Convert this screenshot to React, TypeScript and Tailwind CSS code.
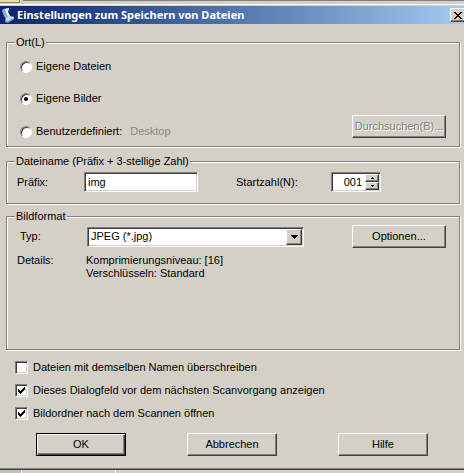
import { useState } from "react";
import type { ButtonHTMLAttributes, InputHTMLAttributes, ReactNode } from "react";

type Location = "documents" | "pictures" | "custom";

const RAISED =
  "border border-t-white border-l-white border-r-[#404040] border-b-[#404040] shadow-[inset_-1px_-1px_0_#808080]";
const DEFAULT_RAISED =
  "border border-black shadow-[inset_1px_1px_0_#fff,inset_-1px_-1px_0_#404040,inset_-2px_-2px_0_#808080]";
const SUNKEN =
  "border border-t-[#808080] border-l-[#808080] border-r-white border-b-white shadow-[inset_1px_1px_0_#404040,inset_-1px_-1px_0_#d4d0c8]";

const Button = ({
  className = "",
  isDefault = false,
  ...props
}: ButtonHTMLAttributes<HTMLButtonElement> & { isDefault?: boolean }) => (
  <button
    type="button"
    className={`h-[23px] shrink-0 bg-[#d4d0c8] text-center ${
      isDefault ? DEFAULT_RAISED : RAISED
    } ${className}`}
    {...props}
  />
);

const Group = ({
  title,
  className = "",
  children,
}: {
  title: string;
  className?: string;
  children: ReactNode;
}) => (
  <fieldset
    className={`min-w-0 border border-[#808080] shadow-[1px_1px_0_#fff,inset_1px_1px_0_#fff] ${className}`}
  >
    <legend className="ml-2 bg-[#d4d0c8] px-px">{title}</legend>
    {children}
  </fieldset>
);

const Radio = ({
  label,
  ...props
}: InputHTMLAttributes<HTMLInputElement> & { label: string }) => (
  <label className="flex items-center gap-1">
    <span className="relative size-3 shrink-0">
      <input
        type="radio"
        name="location"
        className="peer block size-3 appearance-none rounded-full border border-t-[#808080] border-l-[#808080] border-r-white border-b-white bg-white shadow-[inset_1px_1px_0_#404040]"
        {...props}
      />
      <span className="pointer-events-none absolute top-1 left-1 hidden size-1 rounded-full bg-black peer-checked:block" />
    </span>
    {label}
  </label>
);

const Checkbox = ({
  label,
  defaultChecked,
}: {
  label: string;
  defaultChecked?: boolean;
}) => (
  <label className="flex items-center gap-[5px]">
    <span className="relative size-[13px] shrink-0">
      <input
        type="checkbox"
        defaultChecked={defaultChecked}
        className={`peer block size-[13px] appearance-none bg-white ${SUNKEN}`}
      />
      <svg
        viewBox="0 0 7 7"
        shapeRendering="crispEdges"
        className="pointer-events-none absolute top-[3px] left-[3px] hidden size-[7px] peer-checked:block"
      >
        <path d="M0 2h1v1h1v1h1v-1h1v-1h1v-1h1v-1h1v3h-1v1h-1v1h-1v1h-1v1h-1v-1h-1v-1h-1z" />
      </svg>
    </span>
    {label}
  </label>
);

const App = () => {
  const [location, setLocation] = useState<Location>("pictures");
  const [start, setStart] = useState(1);

  return (
    <div className="overflow-hidden bg-[#d4d0c8] font-['Liberation_Sans',Arial,sans-serif] text-[11px] leading-[13px] text-black">
      {/* Edge of the window behind */}
      <div className="flex h-1 items-start">
        <div className="h-[3px] w-5 border-r border-b border-[#8c8468] bg-[#e6dcb4]" />
        <div className="ml-[3px] h-px flex-1 bg-[#808080]" />
      </div>

      <div className="border-t border-white pt-px">
        {/* Title bar */}
        <header className="flex h-[18px] items-center bg-linear-to-r from-[#0a246a] to-[#a6caf0] pl-px">
          <svg viewBox="0 0 14 16" className="h-4 w-3.5 shrink-0">
            <path d="M1 4L2 2L8 1L7 5L9 9L5 12L3 9Z" fill="#8fa8dc" />
            <path d="M4 2L8 1L7 5L9 9L7 10L5 6Z" fill="#e6effc" />
            <path d="M5 11L9 9L13 10L13 12L7 15L4 14Z" fill="#c8d8f6" />
            <path d="M4 13L7 14L13 11L13 12L7 16L4 15Z" fill="#7b94d0" />
          </svg>
          <h1 className="ml-0.5 flex-1 truncate font-['Noto_Sans',Tahoma,sans-serif] text-[11px] leading-[18px] font-bold text-white">
            Einstellungen zum Speichern von Dateien
          </h1>
          <button
            type="button"
            aria-label="Schließen"
            className={`-mr-0.5 flex h-3.5 w-4 shrink-0 items-center justify-center bg-[#d4d0c8] ${RAISED}`}
          >
            <svg viewBox="0 0 8 7" shapeRendering="crispEdges" className="h-[7px] w-2">
              <path d="M0 0h2v1h1v1h2v-1h1v-1h2v1h-1v1h-1v1h-1v1h1v1h1v1h1v1h-2v-1h-1v-1h-2v1h-1v1h-2v-1h1v-1h1v-1h1v-1h-1v-1h-1v-1h-1z" />
            </svg>
          </button>
        </header>

        <form className="pt-3 pr-1 pl-1.5" onSubmit={(e) => e.preventDefault()}>
          <Group title="Ort(L)">
            <div className="px-[13px] pt-[11px] pb-2">
              <Radio
                label="Eigene Dateien"
                checked={location === "documents"}
                onChange={() => setLocation("documents")}
              />
              <div className="pt-[19px]">
                <Radio
                  label="Eigene Bilder"
                  checked={location === "pictures"}
                  onChange={() => setLocation("pictures")}
                />
              </div>
              <div className="flex items-end pt-2.5">
                <Radio
                  label="Benutzerdefiniert:"
                  checked={location === "custom"}
                  onChange={() => setLocation("custom")}
                />
                <span className="ml-2 flex-1 text-[#8c8984]">Desktop</span>
                <Button
                  disabled={location !== "custom"}
                  className="w-[94px] disabled:text-[#808080] disabled:text-shadow-[1px_1px_0_#fff]"
                >
                  Durchsuchen(B)...
                </Button>
              </div>
            </div>
          </Group>

          <Group title="Dateiname (Präfix + 3-stellige Zahl)" className="mt-2">
            <div className="flex items-center pt-1 pb-[11px] pl-2.5">
              <label htmlFor="prefix" className="w-[67px]">
                Präfix:
              </label>
              <input
                id="prefix"
                defaultValue="img"
                className={`h-5 w-[114px] bg-white px-[3px] ${SUNKEN}`}
              />
              <label htmlFor="start" className="ml-[38px] w-[95px]">
                Startzahl(N):
              </label>
              <div className={`flex h-5 w-[50px] bg-white p-px ${SUNKEN}`}>
                <input
                  id="start"
                  inputMode="numeric"
                  value={String(start).padStart(3, "0")}
                  onChange={(e) => setStart(Number(e.target.value) || 0)}
                  className="w-0 flex-1 pr-[3px] text-right"
                />
                <div className="flex w-3.5 flex-col">
                  <button
                    type="button"
                    aria-label="Erhöhen"
                    onClick={() => setStart(start + 1)}
                    className={`flex h-2 items-center justify-center bg-[#d4d0c8] ${RAISED}`}
                  >
                    <svg viewBox="0 0 3 2" shapeRendering="crispEdges" className="h-0.5 w-[3px]">
                      <path d="M1 0h1v1h1v1h-3v-1h1z" />
                    </svg>
                  </button>
                  <button
                    type="button"
                    aria-label="Verringern"
                    onClick={() => setStart(Math.max(0, start - 1))}
                    className={`flex h-2 items-center justify-center bg-[#d4d0c8] ${RAISED}`}
                  >
                    <svg viewBox="0 0 3 2" shapeRendering="crispEdges" className="h-0.5 w-[3px]">
                      <path d="M0 0h3v1h-1v1h-1v-1h-1z" />
                    </svg>
                  </button>
                </div>
              </div>
            </div>
          </Group>

          <Group title="Bildformat" className="mt-1.5">
            <div className="pt-0.5 pr-[13px] pb-[69px] pl-2.5">
              <div className="flex items-center">
                <label htmlFor="type" className="w-[70px] pl-[3px]">
                  Typ:
                </label>
                <div className="relative">
                  <select
                    id="type"
                    className={`block h-5 w-[217px] appearance-none bg-white pl-[3px] ${SUNKEN}`}
                  >
                    <option>JPEG (*.jpg)</option>
                  </select>
                  <span
                    className={`pointer-events-none absolute top-0.5 right-0.5 flex h-4 w-4 items-center justify-center bg-[#d4d0c8] ${RAISED}`}
                  >
                    <svg viewBox="0 0 7 4" shapeRendering="crispEdges" className="h-1 w-[7px]">
                      <path d="M0 0h7v1h-1v1h-1v1h-1v1h-1v-1h-1v-1h-1v-1h-1z" />
                    </svg>
                  </span>
                </div>
                <Button className="ml-auto w-[94px]">Optionen...</Button>
              </div>
              <div className="flex pt-1.5">
                <span className="w-[69px]">Details:</span>
                <p>
                  Komprimierungsniveau: [16]
                  <br />
                  Verschlüsseln: Standard
                </p>
              </div>
            </div>
          </Group>

          <div className="flex flex-col gap-2.5 pt-[11px] pl-[9px]">
            <Checkbox label="Dateien mit demselben Namen überschreiben" />
            <Checkbox
              label="Dieses Dialogfeld vor dem nächsten Scanvorgang anzeigen"
              defaultChecked
            />
            <Checkbox label="Bildordner nach dem Scannen öffnen" defaultChecked />
          </div>

          <div className="flex justify-between pt-[13px] pr-8 pb-3 pl-[30px]">
            <Button isDefault className="w-[90px]">
              OK
            </Button>
            <Button className="w-[90px]">Abbrechen</Button>
            <Button className="w-[90px]">Hilfe</Button>
          </div>
        </form>
      </div>

      {/* Lower frame of the dialog and the window behind */}
      <div className="border-t border-b border-t-[#808080] border-b-[#404040]" />
      <div className="flex h-[3px]">
        <div className="w-[22px] border-r border-white bg-[#c0c0c0]" />
        <div className="w-[94px] border-r border-white" />
      </div>
    </div>
  );
};

export default App;
